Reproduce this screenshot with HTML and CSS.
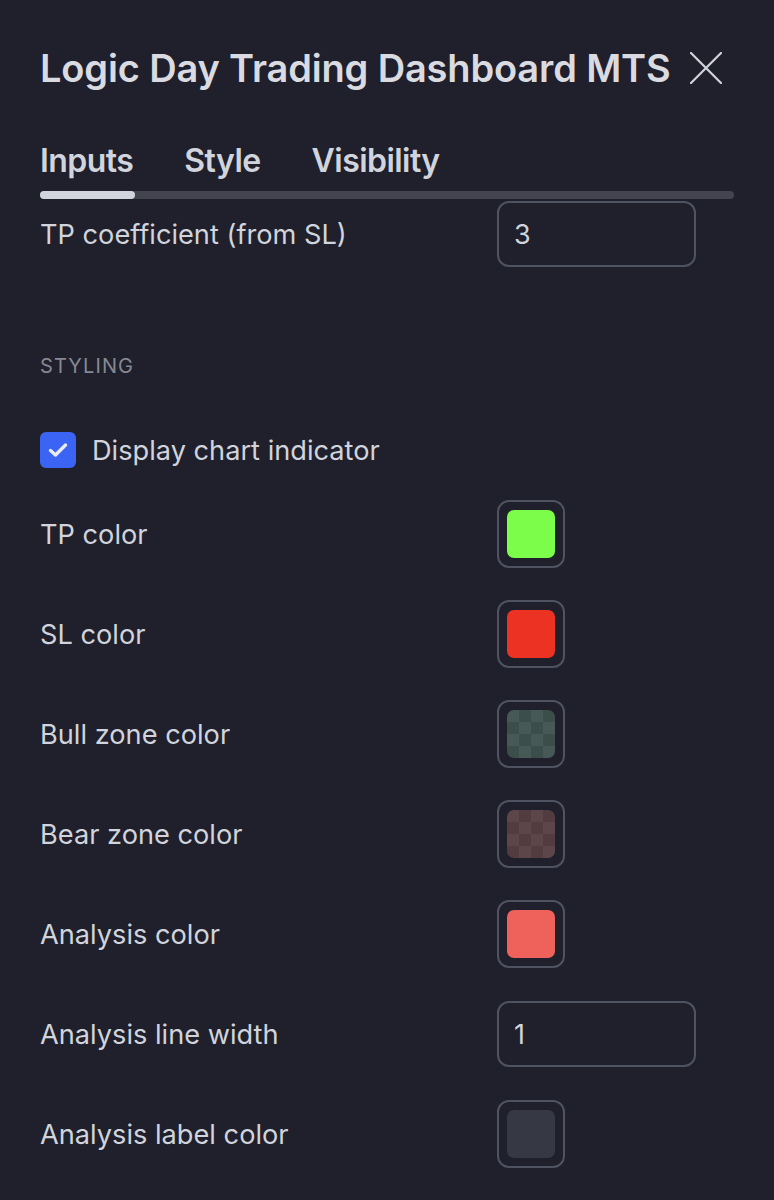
FILE: index.html
```html
<!DOCTYPE html>
<html lang="en">
<head>
<meta charset="utf-8">
<title>Logic Day Trading Dashboard MTS</title>
<link rel="stylesheet" href="styles.css">
</head>
<body>
<div class="dialog">
  <header class="head">
    <h1 class="title">Logic Day Trading Dashboard MTS</h1>
    <button class="close" aria-label="Close">
      <svg width="32" height="32" viewBox="0 0 32 32"><path d="M1 1 L31 31 M31 1 L1 31" stroke="#d1d4dc" stroke-width="2.2" fill="none" stroke-linecap="round"/></svg>
    </button>
  </header>
  <nav class="tabs">
    <span class="tab active">Inputs</span>
    <span class="tab">Style</span>
    <span class="tab">Visibility</span>
  </nav>
  <div class="track"><div class="thumb"></div></div>

  <div class="content">
    <div class="row">
      <span class="label">TP coefficient (from SL)</span>
      <div class="input">3</div>
    </div>

    <div class="section">STYLING</div>

    <label class="check-row">
      <span class="checkbox">
        <svg width="22" height="18" viewBox="0 0 22 18"><path d="M3.5 9.5 L8.5 14 L18.5 4" stroke="#e9ebf2" stroke-width="3.4" fill="none" stroke-linecap="round" stroke-linejoin="round"/></svg>
      </span>
      <span class="label">Display chart indicator</span>
    </label>

    <div class="rows">
      <div class="row"><span class="label">TP color</span><div class="swatch"><span class="chip green"></span></div></div>
      <div class="row"><span class="label">SL color</span><div class="swatch"><span class="chip red"></span></div></div>
      <div class="row"><span class="label">Bull zone color</span><div class="swatch"><span class="chip bull"></span></div></div>
      <div class="row"><span class="label">Bear zone color</span><div class="swatch"><span class="chip bear"></span></div></div>
      <div class="row"><span class="label">Analysis color</span><div class="swatch"><span class="chip salmon"></span></div></div>
      <div class="row"><span class="label">Analysis line width</span><div class="input">1</div></div>
      <div class="row"><span class="label">Analysis label color</span><div class="swatch"><span class="chip grey"></span></div></div>
    </div>
  </div>
</div>
</body>
</html>
```

FILE: styles.css
```css
* { box-sizing: border-box; }
html, body { margin: 0; padding: 0; }
body {
  background: #1f202b;
  font-family: Inter, "Noto Sans", "Liberation Sans", sans-serif;
  color: #d1d4dc;
  width: 774px;
  height: 1200px;
  overflow: hidden;
}
.dialog {
  padding: 40px 40px 0 40px;
}
.head {
  display: flex;
  align-items: center;
  height: 56px;
}
.title {
  margin: 0;
  font-size: 38px;
  font-weight: 600;
  color: #dadbe1;
  letter-spacing: -0.15px;
  white-space: nowrap;
}
.close {
  margin-left: 19px;
  background: none;
  border: 0;
  padding: 0;
  width: 32px;
  height: 32px;
  display: flex;
}
.tabs {
  display: flex;
  gap: 51px;
  margin-top: 44px;
  height: 40px;
  align-items: center;
}
.tab {
  font-size: 32px;
  font-weight: 600;
  color: #d1d4dc;
  letter-spacing: -0.55px;
}
.track {
  margin-top: 11px;
  height: 8px;
  width: 694px;
  background: #434450;
  border-radius: 4px;
}
.thumb {
  width: 95px;
  height: 8px;
  background: #d1d4dc;
  border-radius: 4px;
}
.content {
  margin-top: 1px;
}
.row {
  display: flex;
  align-items: center;
  height: 68px;
}
.label {
  font-size: 27.2px;
  color: #d1d4dc;
}
.row .label {
  width: 457px;
}
.input {
  width: 199px;
  height: 66px;
  border: 2px solid #4f5260;
  border-radius: 12px;
  display: flex;
  align-items: center;
  padding-left: 15px;
  font-size: 27px;
  color: #d1d4dc;
}
.section {
  margin-top: 86px;
  line-height: 24px;
  font-size: 20px;
  letter-spacing: 1.1px;
  color: #868993;
}
.check-row {
  margin-top: 54px;
  display: flex;
  align-items: center;
  gap: 16px;
  height: 36px;
}
.checkbox {
  width: 36px;
  height: 36px;
  border-radius: 6px;
  background: #3c64f4;
  display: flex;
  align-items: center;
  justify-content: center;
}
.rows {
  margin-top: 32px;
  display: flex;
  flex-direction: column;
  gap: 32px;
}
.swatch {
  width: 68px;
  height: 68px;
  border: 2px solid #4f5260;
  border-radius: 12px;
  display: flex;
  align-items: center;
  justify-content: center;
}
.chip {
  width: 48px;
  height: 48px;
  border-radius: 7px;
  display: block;
}
.green { background: #7bfd4a; }
.red { background: #ec3323; }
.salmon { background: #ee625b; }
.grey { background: #363843; }
.bull {
  background-image: conic-gradient(#3c4e4a 25%, #475957 0 50%, #3c4e4a 0 75%, #475957 0);
  background-size: 24px 24px;
}
.bear {
  background-image: conic-gradient(#523c3f 25%, #5d4649 0 50%, #523c3f 0 75%, #5d4649 0);
  background-size: 24px 24px;
}
```
